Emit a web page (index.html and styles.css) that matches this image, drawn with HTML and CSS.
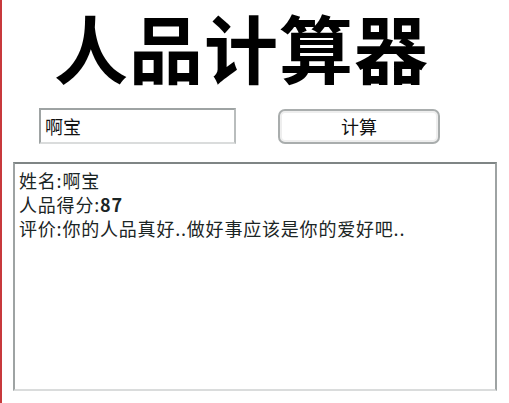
FILE: index.html
```html
<!DOCTYPE html>
<html lang="zh">
<head>
	<meta charset="UTF-8">
	<title>人品计算器</title>
	<link rel="stylesheet" href="styles.css">
</head>
<body>
	<div class="page">
		<h1 class="title">人品计算器</h1>

		<div class="form">
			<input id="userName" class="name" type="text" value="啊宝">
			<button id="calc" class="calc" type="button">计算</button>
		</div>

		<div class="result">
			<p>姓名:啊宝</p>
			<p>人品得分:<b>87</b></p>
			<p>评价:你的人品真好..做好事应该是你的爱好吧..</p>
		</div>
	</div>
</body>
</html>
```

FILE: styles.css
```css
html, body {
	margin: 0;
	height: 100%;
	background-color: #ffffff;
}

body {
	border-left: 2px solid #c8393c;
	box-sizing: border-box;
	font-family: "Noto Sans CJK SC", "Liberation Sans", sans-serif;
	color: #111111;
}

.page {
	width: 484px;
	padding-left: 11px;
}

.title {
	margin: -7px 0 0 0;
	padding: 0 0 0 41px;
	font-size: 74px;
	line-height: 106px;
	font-weight: bold;
	letter-spacing: 1px;
	white-space: nowrap;
	color: #000000;
}

.form {
	display: flex;
	align-items: center;
	height: 54px;
	padding-left: 26px;
}

.name {
	box-sizing: border-box;
	width: 197px;
	height: 36px;
	margin: 0;
	padding: 0 4px;
	border: 2px solid #9ea3a3;
	border-bottom-color: #dadcdc;
	border-right-color: #b9bdbd;
	font-family: "Noto Sans CJK SC", sans-serif;
	font-size: 18px;
	color: #111111;
	outline: none;
}

#calc {
	box-sizing: border-box;
	width: 162px;
	height: 35px;
	margin-left: 42px;
	border: 2px solid #a9adad;
	border-radius: 7px;
	background-color: #ffffff;
	box-shadow: inset 0 0 0 2px #eeeeee;
	font-family: "Noto Sans CJK SC", sans-serif;
	font-size: 18px;
	color: #111111;
}

.result {
	box-sizing: border-box;
	width: 484px;
	height: 229px;
	margin-top: 9px;
	padding: 4px 4px;
	border: 2px solid #9ea3a3;
	border-top-color: #7f8585;
	border-bottom-color: #dadcdc;
	font-size: 18px;
	line-height: 24px;
	letter-spacing: 0.8px;
	color: #1b2525;
}

.result p {
	margin: 0;
}
```
